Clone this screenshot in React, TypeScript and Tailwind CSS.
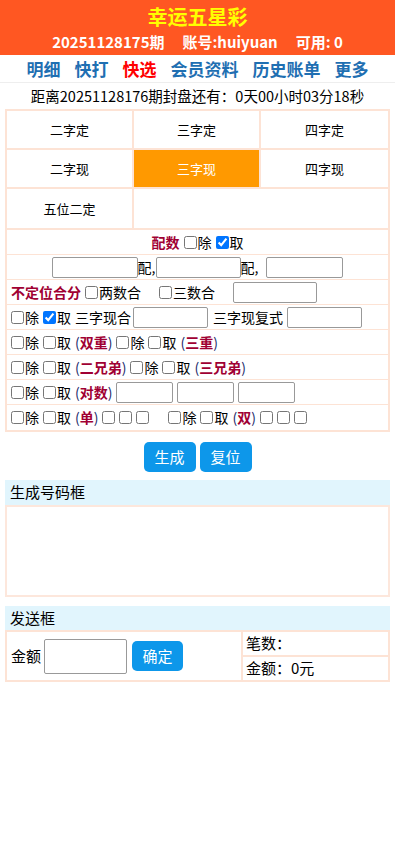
import React from 'react';

const font = { fontFamily: '"Noto Sans CJK SC", "Noto Sans", sans-serif' };

const Cb = ({ checked = false }: { checked?: boolean }) => (
  <input type="checkbox" defaultChecked={checked} className="m-0 mr-[1px] h-[13px] w-[13px] align-[-2px]" />
);

const Box = ({ w }: { w: string }) => (
  <input type="text" className={`${w} h-[21px] border border-[#999] rounded-[2px] bg-white align-middle`} />
);

const Tag = ({ t }: { t: string }) => (
  <span className="text-[#1b2a6b]">
    (<span className="text-[#a00033] font-bold">{t}</span>)
  </span>
);

const Row = ({ children, center = false, last = false }: { children: React.ReactNode; center?: boolean; last?: boolean }) => (
  <div className={`flex items-center h-[25px] px-[4px] whitespace-nowrap ${center ? 'justify-center' : ''} ${last ? '' : 'border-b border-[#fde3d5]'}`}>
    {children}
  </div>
);

export default function App() {
  const nav = ['明细', '快打', '快选', '会员资料', '历史账单', '更多'];
  const types = ['二字定', '三字定', '四字定', '二字现', '三字现', '四字现', '五位二定'];

  return (
    <div className="w-[395px] min-h-[846px] bg-white text-[14px] text-black" style={font}>
      {/* header */}
      <div className="bg-[#ff5722] h-[55px] flex flex-col items-center pt-[3px]">
        <div className="text-[20px] font-bold leading-[28px] text-[#ffff00]">幸运五星彩</div>
        <div className="flex gap-[18px] text-[15px] font-bold leading-[22px] text-white">
          <span>20251128175期</span>
          <span>账号:huiyuan</span>
          <span>可用: 0</span>
        </div>
      </div>

      {/* nav */}
      <div className="h-[28px] flex items-center justify-center gap-[14px] border-b border-[#eeeeee]">
        {nav.map((n) => (
          <span key={n} className={`text-[17px] font-bold leading-none ${n === '快选' ? 'text-[#ff0000]' : 'text-[#1f6fb2]'}`}>
            {n}
          </span>
        ))}
      </div>

      <div className="h-[26px] flex items-center justify-center text-[14.5px]">
        距离20251128176期封盘还有：0天00小时03分18秒
      </div>

      {/* play types */}
      <div className="mx-[5px] border-2 border-[#fde3d5] border-b-0 grid grid-cols-3">
        {types.map((t, i) => (
          <div
            key={t}
            className={`flex items-center justify-center h-[39px] text-[13px] border-[#fde3d5] ${i % 3 !== 2 ? 'border-r-2' : ''} ${i < 6 ? 'border-b-2' : ''} ${t === '三字现' ? 'bg-[#ff9900] text-white' : ''}`}
          >
            {t}
          </div>
        ))}
      </div>

      {/* options */}
      <div className="mx-[5px] border-2 border-[#fde3d5] text-[14px]">
        <Row center>
          <span className="font-bold text-[#a00033] mr-[4px]">配数</span>
          <Cb />除 <span className="ml-[4px]" /><Cb checked />取
        </Row>
        <Row center>
          <Box w="w-[86px]" />配,<Box w="w-[85px]" />配,<span className="w-[8px]" /><Box w="w-[77px]" />
        </Row>
        <Row>
          <span className="font-bold text-[#a00033] mr-[4px]">不定位合分</span>
          <Cb />两数合<span className="w-[18px]" /><Cb />三数合<span className="w-[18px]" />
          <Box w="w-[84px]" />
        </Row>
        <Row>
          <Cb />除 <span className="w-[4px]" /><Cb checked />取 <span className="w-[4px]" />三字现合<span className="w-[2px]" />
          <Box w="w-[75px]" /><span className="w-[5px]" />三字现复式<span className="w-[4px]" />
          <Box w="w-[75px]" />
        </Row>
        <Row>
          <Cb />除<span className="w-[4px]" /><Cb />取<span className="w-[4px]" /><Tag t="双重" /><span className="w-[4px]" />
          <Cb />除<span className="w-[4px]" /><Cb />取<span className="w-[4px]" /><Tag t="三重" />
        </Row>
        <Row>
          <Cb />除<span className="w-[4px]" /><Cb />取<span className="w-[4px]" /><Tag t="二兄弟" /><span className="w-[4px]" />
          <Cb />除<span className="w-[4px]" /><Cb />取<span className="w-[4px]" /><Tag t="三兄弟" />
        </Row>
        <Row>
          <Cb />除<span className="w-[4px]" /><Cb />取<span className="w-[4px]" /><Tag t="对数" /><span className="w-[4px]" />
          <Box w="w-[57px]" /><span className="w-[4px]" /><Box w="w-[57px]" /><span className="w-[4px]" /><Box w="w-[57px]" />
        </Row>
        <Row last>
          <Cb />除<span className="w-[4px]" /><Cb />取<span className="w-[4px]" /><Tag t="单" /><span className="w-[4px]" />
          <Cb /><span className="w-[3px]" /><Cb /><span className="w-[3px]" /><Cb />
          <span className="w-[18px]" />
          <Cb />除<span className="w-[4px]" /><Cb />取<span className="w-[4px]" /><Tag t="双" /><span className="w-[4px]" />
          <Cb /><span className="w-[3px]" /><Cb /><span className="w-[3px]" /><Cb />
        </Row>
      </div>

      {/* buttons */}
      <div className="flex justify-center gap-[4px] mt-[10px] mb-[8px]">
        <button className="w-[52px] h-[30px] rounded-[5px] bg-[#0d97ea] text-white text-[15px]">生成</button>
        <button className="w-[52px] h-[30px] rounded-[5px] bg-[#0d97ea] text-white text-[15px]">复位</button>
      </div>

      <div className="mx-[5px]">
        <div className="h-[25px] bg-[#e1f5fd] flex items-center px-[5px] text-[15px]">生成号码框</div>
        <div className="h-[92px] border-2 border-[#fde7dc]" />
      </div>

      <div className="mx-[5px] mt-[9px]">
        <div className="h-[24px] bg-[#e1f5fd] flex items-center px-[5px] text-[15px]">发送框</div>
        <div className="flex border-2 border-[#fde3d5] h-[52px]">
          <div className="w-[236px] flex items-center px-[4px] border-r-2 border-[#fde3d5]">
            <span className="text-[15px]">金额</span>
            <input type="text" className="ml-[3px] w-[83px] h-[35px] border border-[#999] rounded-[2px]" />
            <button className="ml-[5px] w-[51px] h-[30px] rounded-[5px] bg-[#0d97ea] text-white text-[15px]">确定</button>
          </div>
          <div className="flex-1 flex flex-col">
            <div className="flex-1 flex items-center px-[3px] border-b-2 border-[#fde3d5] text-[15px]">笔数：</div>
            <div className="flex-1 flex items-center px-[3px] text-[15px]">金额：0元</div>
          </div>
        </div>
      </div>
    </div>
  );
}
